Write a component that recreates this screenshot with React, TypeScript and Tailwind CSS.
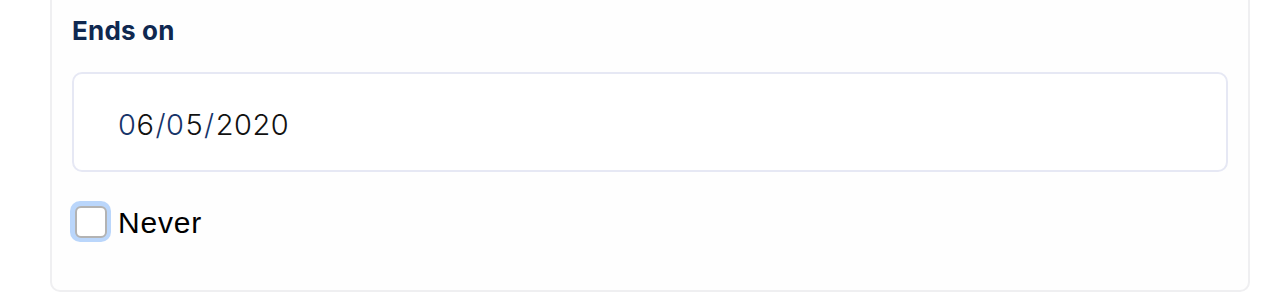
export default function App() {
  return (
    <div className="h-[304px] w-[1288px] overflow-hidden bg-white">
      <div className="ml-[50px] w-[1200px] rounded-b-[10px] border-x-2 border-b-2 border-[#efeff1] bg-[#fefefe] px-[20px] pb-[47px] pt-[14px]">
        <label
          className="block h-[32px] text-[26px] font-bold leading-[34px] tracking-[0.2px] text-[#0f2850]"
          style={{ fontFamily: "Inter, 'Noto Sans', sans-serif" }}
        >
          Ends on
        </label>
        <div className="mt-[26px] flex h-[100px] items-center rounded-[10px] border-2 border-[#e6e8f4] bg-white pl-[44px] pt-[5px]">
          <span
            className="text-[29px] font-light tracking-[0.5px] text-[#111111]"
            style={{ fontFamily: "Inter, 'Noto Sans', sans-serif" }}
          >
            <span className="text-[#17346a]">0</span>6
            <span className="mx-[1px] text-[#17346a]">/0</span>5
            <span className="mx-[1px] text-[#17346a]">/</span>2020
          </span>
        </div>
        <div className="mt-[28px] flex items-center">
          <span className="ml-[-2px] flex h-[41px] w-[41px] items-center justify-center rounded-[10px] bg-[#bad6fb]">
            <span className="h-[32px] w-[32px] rounded-[6px] border-2 border-[#b3b3b3] bg-white" />
          </span>
          <span
            className="ml-[7px] pt-[3px] text-[30px] leading-[40px] tracking-[0.8px] text-black"
            style={{ fontFamily: "'Liberation Sans', Arial, sans-serif" }}
          >
            Never
          </span>
        </div>
      </div>
    </div>
  );
}
